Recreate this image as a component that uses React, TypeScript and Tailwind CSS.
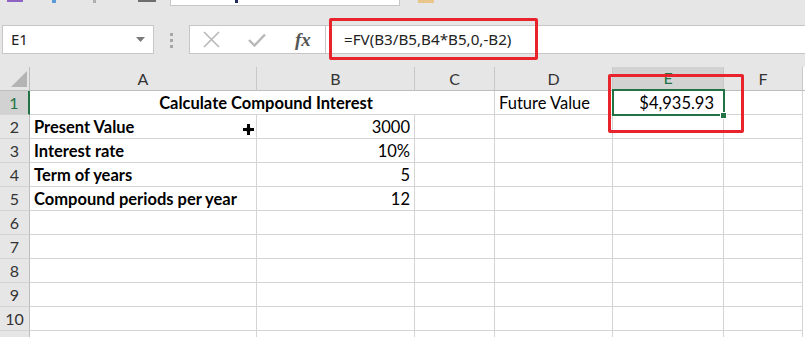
import React from "react";

const cols = ["A", "B", "C", "D", "E", "F"];
const colTemplate = "grid-cols-[30px_227px_158px_80px_118px_111px_79px_2px]";

type Row = { n: number; a?: string; b?: string };

const rows: Row[] = [
  { n: 2, a: "Present Value", b: "3000" },
  { n: 3, a: "Interest rate", b: "10%" },
  { n: 4, a: "Term of years", b: "5" },
  { n: 5, a: "Compound periods per year", b: "12" },
  { n: 6 },
  { n: 7 },
  { n: 8 },
  { n: 9 },
  { n: 10 },
];

function RowHead({ n, active }: { n?: number; active?: boolean }) {
  return (
    <div
      className={`h-[24px] flex items-center justify-center border-b border-[#d4d4d4] text-[16px] ${
        active
          ? "bg-[#d2d2d2] text-[#217346] border-r-2 border-r-[#217346]"
          : "bg-[#e6e6e6] text-[#333] border-r border-r-[#bdbdbd]"
      }`}
    >
      {n}
    </div>
  );
}

const cell = "h-[24px] border-r border-b border-[#d4d4d4] bg-white flex items-center pt-[1px] text-[16.5px] text-black overflow-hidden whitespace-nowrap";

export default function App() {
  return (
    <div className="relative w-[805px] h-[337px] overflow-hidden bg-[#e6e6e6] font-['Lato',sans-serif]">
      {/* ribbon edge, cut off */}
      <div className="h-[25px] flex items-start">
        <div className="ml-[7px] w-[16px] h-[2px] bg-[#8f63c4]" />
        <div className="ml-[29px] w-[4px] h-[3px] bg-[#5b9bd5]" />
        <div className="ml-[37px] w-[3px] h-[3px] bg-[#b0b0b0]" />
        <div className="ml-[42px] w-[18px] h-[2px] bg-[#6e6e6e]" />
        <div className="ml-[14px] w-[230px] h-[6px] bg-white border-x border-b border-[#c6c6c6] flex">
          <div className="ml-[64px] w-[3px] h-[3px] bg-[#1f2a5a]" />
        </div>
        <div className="ml-[18px] w-[16px] h-[3px] bg-[#e8c58a]" />
      </div>

      {/* name box + formula bar */}
      <div className="flex items-start h-[29px]">
        <div className="ml-[2px] w-[152px] h-[29px] bg-white border border-[#c6c6c6] flex items-center justify-between pl-[8px] pr-[8px]">
          <span className="font-['Noto_Sans',sans-serif] text-[15px] text-[#222]">E1</span>
          <svg width="9" height="5" viewBox="0 0 9 5">
            <path d="M0 0 L9 0 L4.5 5 Z" fill="#7a7a7a" />
          </svg>
        </div>
        <div className="ml-[16px] mt-[8px] flex flex-col gap-[3px]">
          <div className="w-[3px] h-[3px] bg-[#a6a6a6]" />
          <div className="w-[3px] h-[3px] bg-[#a6a6a6]" />
          <div className="w-[3px] h-[3px] bg-[#a6a6a6]" />
        </div>
        <div className="ml-[16px] flex-1 h-[29px] bg-white border border-[#c6c6c6] border-r-0 flex items-center">
          <div className="w-[136px] h-full flex items-center border-r border-[#c6c6c6]">
            <svg className="ml-[13px]" width="17" height="17" viewBox="0 0 17 17">
              <path d="M1 1 L16 16 M16 1 L1 16" stroke="#b8b8b8" strokeWidth="1.6" />
            </svg>
            <svg className="ml-[28px]" width="18" height="14" viewBox="0 0 18 14">
              <path d="M1 7 L6.5 12.5 L17 1.5" stroke="#b8b8b8" strokeWidth="2.4" fill="none" />
            </svg>
            <span className="ml-[29px] font-['Liberation_Serif',serif] italic font-bold text-[19px] text-[#555] leading-none">
              fx
            </span>
          </div>
          <span className="ml-[18px] font-['Noto_Sans',sans-serif] text-[15.2px] text-[#222] whitespace-nowrap">
            =FV(B3/B5,B4*B5,0,-B2)
          </span>
        </div>
      </div>

      <div className="h-[13px]" />

      {/* sheet grid */}
      <div className={`grid ${colTemplate}`}>
        {/* column header row */}
        <div className="h-[24px] bg-[#e6e6e6] border-r border-b border-[#bdbdbd] relative">
          <svg className="absolute left-[11px] top-[4px]" width="16" height="16" viewBox="0 0 16 16">
            <path d="M16 0 L16 16 L0 16 Z" fill="#b4b4b4" />
          </svg>
        </div>
        {cols.map((c) => (
          <div
            key={c}
            className={`h-[24px] flex items-center justify-center border-r border-[#c8c8c8] border-b text-[16px] ${
              c === "E"
                ? "bg-[#d2d2d2] text-[#217346] border-b-2 border-b-[#217346]"
                : "bg-[#e6e6e6] text-[#333] border-b-[#bdbdbd]"
            }`}
          >
            {c}
          </div>
        ))}
        <div className="h-[24px] bg-white border-b border-[#bdbdbd]" />

        {/* row 1 */}
        <RowHead n={1} active />
        <div className={`${cell} col-span-3 justify-center font-bold pl-[8px]`}>Calculate Compound Interest</div>
        <div className={`${cell} pl-[4px]`}>Future Value</div>
        <div className={`${cell} justify-end pr-[9px]`}>$4,935.93</div>
        <div className={cell} />
        <div className="h-[24px] bg-white" />

        {rows.map((r) => (
          <React.Fragment key={r.n}>
            <RowHead n={r.n} />
            <div className={`${cell} pl-[4px] font-bold`}>{r.a}</div>
            <div className={`${cell} justify-end pr-[4px]`}>{r.b}</div>
            <div className={cell} />
            <div className={cell} />
            <div className={cell} />
            <div className={cell} />
            <div className="h-[24px] bg-white" />
          </React.Fragment>
        ))}

        {/* row 11, mostly below the fold */}
        <RowHead />
        <div className={cell} />
        <div className={cell} />
        <div className={cell} />
        <div className={cell} />
        <div className={cell} />
        <div className={cell} />
        <div className="h-[24px] bg-white" />
      </div>

      {/* active cell outline on E1 */}
      <div className="absolute left-[612px] top-[89px] w-[113px] h-[27px] border-2 border-[#217346] pointer-events-none" />
      <div className="absolute left-[720px] top-[112px] w-[7px] h-[7px] bg-[#217346] border border-white pointer-events-none" />

      {/* fill cursor */}
      <svg className="absolute left-[242px] top-[123px] pointer-events-none" width="13" height="13" viewBox="0 0 13 13">
        <path d="M4.5 0.5 H8.5 V4.5 H12.5 V8.5 H8.5 V12.5 H4.5 V8.5 H0.5 V4.5 H4.5 Z" fill="#000" stroke="#fff" strokeWidth="1" />
      </svg>

      {/* red annotation boxes */}
      <div className="absolute left-[329px] top-[18px] w-[209px] h-[42px] border-[3px] border-[#e8232b] rounded-[2px] pointer-events-none" />
      <div className="absolute left-[608px] top-[74px] w-[136px] h-[59px] border-[3px] border-[#e8232b] rounded-[2px] pointer-events-none" />
    </div>
  );
}
